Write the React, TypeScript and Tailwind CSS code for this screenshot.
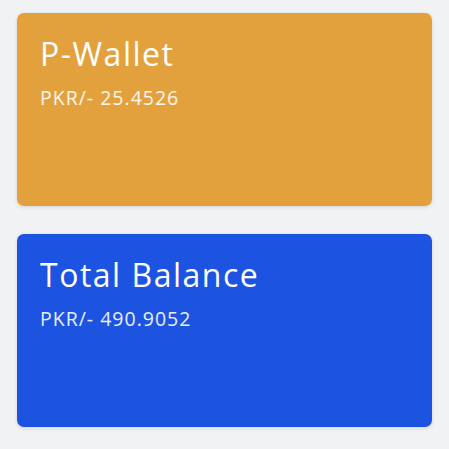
export default function App() {
  const cards = [
    { title: 'P-Wallet', amount: '25.4526', bg: 'bg-[#e3a13e]' },
    { title: 'Total Balance', amount: '490.9052', bg: 'bg-[#1c53e1]' },
  ];
  return (
    <div className="min-h-[449px] bg-[#f1f2f4] px-[17px] pt-[13px] pb-[22px] flex flex-col gap-[28px] font-['Open_Sans',sans-serif]">
      {cards.map((c) => (
        <div
          key={c.title}
          className={`${c.bg} h-[193px] w-[415px] rounded-[7px] shadow-[0_1px_4px_rgba(0,0,0,0.12)] px-[23px] pt-[21px] text-white`}
        >
          <div className="text-[32px] leading-[40px] tracking-[1.5px]">{c.title}</div>
          <div className="mt-[12px] text-[19.5px] leading-[24px] tracking-[1px] text-white/90">PKR/- {c.amount}</div>
        </div>
      ))}
    </div>
  );
}
